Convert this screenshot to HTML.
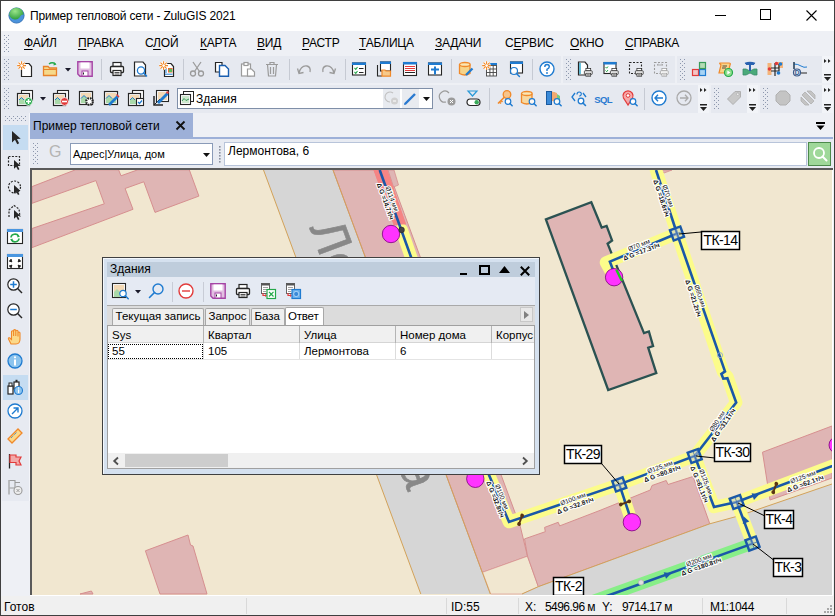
<!DOCTYPE html><html><head><meta charset="utf-8"><style>
*{box-sizing:border-box;margin:0;padding:0}
html,body{width:835px;height:616px;overflow:hidden;background:#eef0f5;font-family:"Liberation Sans",sans-serif;font-size:12px;color:#000}
.a{position:absolute;white-space:pre}
svg{position:absolute;overflow:visible}
.grip{position:absolute;width:7px;background-image:radial-gradient(circle at 1px 1px,#a9aebb 0.75px,transparent 1px),radial-gradient(circle at 3px 2.5px,#a9aebb 0.75px,transparent 1px);background-size:4px 3px}
.sep{position:absolute;width:1px;background:#c8ccd6}
.chev{position:absolute;font-size:8px;line-height:8px;color:#222}
</style></head><body><div class="a" style="left:0px;top:0px;width:835px;height:616px;background:#eef0f5"></div>
<div class="a" style="left:1px;top:1px;width:833px;height:30px;background:#fff"></div>
<svg style="left:8px;top:6.5px" width="17" height="17" viewBox="0 0 17 17"><defs><radialGradient id="gg" cx="0.4" cy="0.3" r="0.7"><stop offset="0" stop-color="#9be58a"/><stop offset="1" stop-color="#2e9d3c"/></radialGradient></defs>
<circle cx="8.5" cy="8.5" r="7.6" fill="#4b93dc" stroke="#2f6db3" stroke-width="0.9"/>
<path d="M1.3 8.6 A7.2 7.2 0 0 1 15.7 7.2 Q12.5 7.8 11.5 10.5 Q10 13 6.5 12.5 Q3 12 1.3 8.6Z" fill="url(#gg)"/></svg>
<div class="a" style="left:30px;top:9px;font-size:12px;letter-spacing:-0.17px">Пример тепловой сети - ZuluGIS 2021</div>
<div class="a" style="left:715px;top:15px;width:11px;height:1px;background:#000"></div>
<div class="a" style="left:760px;top:9px;width:11px;height:11px;border:1px solid #000"></div>
<svg style="left:806px;top:10px" width="11" height="11" viewBox="0 0 11 11"><path d="M0.5 0.5L10.5 10.5M10.5 0.5L0.5 10.5" stroke="#000" stroke-width="1.1"/></svg>
<div class="a" style="left:0px;top:0px;width:835px;height:1px;background:#3f3f3f"></div>
<div class="a" style="left:0px;top:0px;width:1px;height:616px;background:#3f3f3f"></div>
<div class="a" style="left:834px;top:0px;width:1px;height:616px;background:#3f3f3f"></div>
<div class="a" style="left:24px;top:36px;font-size:12px;letter-spacing:-0.2px"><span style="text-decoration:underline;text-underline-offset:1.5px">Ф</span>АЙЛ</div>
<div class="a" style="left:78px;top:36px;font-size:12px;letter-spacing:-0.2px"><span style="text-decoration:underline;text-underline-offset:1.5px">П</span>РАВКА</div>
<div class="a" style="left:145px;top:36px;font-size:12px;letter-spacing:-0.2px">С<span style="text-decoration:underline;text-underline-offset:1.5px">Л</span>ОЙ</div>
<div class="a" style="left:200px;top:36px;font-size:12px;letter-spacing:-0.2px"><span style="text-decoration:underline;text-underline-offset:1.5px">К</span>АРТА</div>
<div class="a" style="left:257px;top:36px;font-size:12px;letter-spacing:-0.2px"><span style="text-decoration:underline;text-underline-offset:1.5px">В</span>ИД</div>
<div class="a" style="left:302px;top:36px;font-size:12px;letter-spacing:-0.2px"><span style="text-decoration:underline;text-underline-offset:1.5px">Р</span>АСТР</div>
<div class="a" style="left:359px;top:36px;font-size:12px;letter-spacing:-0.2px"><span style="text-decoration:underline;text-underline-offset:1.5px">Т</span>АБЛИЦА</div>
<div class="a" style="left:435px;top:36px;font-size:12px;letter-spacing:-0.2px"><span style="text-decoration:underline;text-underline-offset:1.5px">З</span>АДАЧИ</div>
<div class="a" style="left:505px;top:36px;font-size:12px;letter-spacing:-0.2px">С<span style="text-decoration:underline;text-underline-offset:1.5px">Е</span>РВИС</div>
<div class="a" style="left:570px;top:36px;font-size:12px;letter-spacing:-0.2px"><span style="text-decoration:underline;text-underline-offset:1.5px">О</span>КНО</div>
<div class="a" style="left:625px;top:36px;font-size:12px;letter-spacing:-0.2px"><span style="text-decoration:underline;text-underline-offset:1.5px">С</span>ПРАВКА</div>
<svg style="left:4px;top:35px" width="5" height="18" viewBox="0 0 5 18"><g fill="#8d97ad"><rect x="0" y="0" width="1" height="1"/><rect x="4" y="0" width="1" height="1"/><rect x="2" y="2" width="1" height="1"/><rect x="0" y="4" width="1" height="1"/><rect x="4" y="4" width="1" height="1"/><rect x="2" y="6" width="1" height="1"/><rect x="0" y="8" width="1" height="1"/><rect x="4" y="8" width="1" height="1"/><rect x="2" y="10" width="1" height="1"/><rect x="0" y="12" width="1" height="1"/><rect x="4" y="12" width="1" height="1"/><rect x="2" y="14" width="1" height="1"/><rect x="0" y="16" width="1" height="1"/><rect x="4" y="16" width="1" height="1"/></g></svg>
<div class="a" style="left:2px;top:56px;width:559px;height:27px;background:#e6e9f0"></div>
<svg style="left:4px;top:59px" width="5" height="21" viewBox="0 0 5 21"><g fill="#8d97ad"><rect x="0" y="0" width="1" height="1"/><rect x="4" y="0" width="1" height="1"/><rect x="2" y="2" width="1" height="1"/><rect x="0" y="4" width="1" height="1"/><rect x="4" y="4" width="1" height="1"/><rect x="2" y="6" width="1" height="1"/><rect x="0" y="8" width="1" height="1"/><rect x="4" y="8" width="1" height="1"/><rect x="2" y="10" width="1" height="1"/><rect x="0" y="12" width="1" height="1"/><rect x="4" y="12" width="1" height="1"/><rect x="2" y="14" width="1" height="1"/><rect x="0" y="16" width="1" height="1"/><rect x="4" y="16" width="1" height="1"/><rect x="2" y="18" width="1" height="1"/><rect x="0" y="20" width="1" height="1"/><rect x="4" y="20" width="1" height="1"/></g></svg>
<svg style="left:17px;top:61px" width="16" height="16" viewBox="0 0 16 16"><path d="M4.5,2.5 H12 L14.5,5.5 V15.5 H4.5Z" fill="#fff" stroke="#262626" stroke-width="1.2"/><path d="M0.1999999999999993,4.6 H9.0 M4.6,0.1999999999999993 V9.0 M1.5199999999999996,1.5199999999999996 L7.68,7.68 M7.68,1.5199999999999996 L1.5199999999999996,7.68" stroke="#fff" stroke-width="2.4"/><path d="M0.1999999999999993,4.6 H9.0 M4.6,0.1999999999999993 V9.0 M1.5199999999999996,1.5199999999999996 L7.68,7.68 M7.68,1.5199999999999996 L1.5199999999999996,7.68" stroke="#f0892a" stroke-width="1.1"/><circle cx="4.6" cy="4.6" r="1.3" fill="#fff"/></svg>
<svg style="left:42px;top:61px" width="16" height="16" viewBox="0 0 16 16"><path d="M1.5,5.5 H6 L7.5,7 H14.5 V14.5 H1.5Z" fill="#f6d98a" stroke="#e8822a" stroke-width="1.3"/><path d="M1.5,8.5 H14.5" stroke="#e8822a" stroke-width="1"/><path d="M7,3 Q10,0.5 13.5,3" fill="none" stroke="#25a84a" stroke-width="1.4"/><path d="M12,1.2 L14.5,3.5 L11.5,4.5Z" fill="#25a84a"/></svg>
<svg style="left:77px;top:61px" width="16" height="16" viewBox="0 0 16 16"><path d="M0.8,0.8 H15.2 V15.2 H3 L0.8,13Z" fill="#e2c0e2" stroke="#a545a5" stroke-width="1.4"/><rect x="3.5" y="1.5" width="9" height="6" fill="#fff"/><rect x="5" y="10" width="6" height="5" fill="#fff" stroke="#a545a5" stroke-width="1"/><rect x="6" y="11.5" width="1" height="2" fill="#262626"/></svg>
<svg style="left:109px;top:61px" width="16" height="16" viewBox="0 0 16 16"><g transform="translate(0,0) scale(1.0)"><rect x="4" y="1.5" width="8" height="4" fill="#fff" stroke="#262626" stroke-width="1.2"/><rect x="1.5" y="5.5" width="13" height="6" rx="1" fill="#fff" stroke="#262626" stroke-width="1.3"/><rect x="4" y="9.5" width="8" height="5" fill="#fff" stroke="#262626" stroke-width="1.2"/><path d="M5.5,11.5 H10.5 M5.5,13 H10.5" stroke="#262626" stroke-width="0.8"/></g></svg>
<svg style="left:133px;top:61px" width="16" height="16" viewBox="0 0 16 16"><path d="M1.5,1.0 H10 L12.5,4.0 V15.0 H1.5Z" fill="#fff" stroke="#262626" stroke-width="1.2"/><circle cx="8" cy="9.5" r="3.6" fill="#fff" fill-opacity="0.9" stroke="#1f7bd0" stroke-width="1.3"/><path d="M10.52,12.02 l3,3" stroke="#1f7bd0" stroke-width="1.6" stroke-linecap="round"/></svg>
<svg style="left:159px;top:61px" width="16" height="16" viewBox="0 0 16 16"><path d="M5.5,2.5 H12 L14.5,5.5 V15.5 H5.5Z" fill="#fff" stroke="#262626" stroke-width="1.2"/><path d="M0.1999999999999993,4.6 H9.0 M4.6,0.1999999999999993 V9.0 M1.5199999999999996,1.5199999999999996 L7.68,7.68 M7.68,1.5199999999999996 L1.5199999999999996,7.68" stroke="#fff" stroke-width="2.4"/><path d="M0.1999999999999993,4.6 H9.0 M4.6,0.1999999999999993 V9.0 M1.5199999999999996,1.5199999999999996 L7.68,7.68 M7.68,1.5199999999999996 L1.5199999999999996,7.68" stroke="#f0892a" stroke-width="1.1"/><circle cx="4.6" cy="4.6" r="1.3" fill="#fff"/><rect x="9" y="7" width="4.5" height="4.5" fill="#e86a3a"/><rect x="10" y="8" width="3" height="3" fill="#5bbf5b"/><path d="M6,9 H8 M6,11 H8 M6,13.2 H13.5" stroke="#1f7bd0" stroke-width="1"/></svg>
<svg style="left:189px;top:61px" width="16" height="16" viewBox="0 0 16 16"><g stroke="#9b9b9b" stroke-width="1.3" fill="none"><circle cx="4" cy="12.5" r="2.5"/><circle cx="12" cy="12.5" r="2.5"/><path d="M5.5,10.5 L12,1 M10.5,10.5 L4,1"/></g></svg>
<svg style="left:214px;top:61px" width="16" height="16" viewBox="0 0 16 16"><path d="M1.5,1.5 H8 V11 H1.5Z" fill="#fff" stroke="#262626" stroke-width="1.2"/><path d="M5.5,4.5 H11 L14.5,8 V15.2 H5.5Z" fill="#fff" stroke="#1a5fb0" stroke-width="1.4"/></svg>
<svg style="left:240px;top:61px" width="16" height="16" viewBox="0 0 16 16"><g stroke="#9b9b9b" stroke-width="1.2" fill="#fff"><rect x="1.5" y="3" width="9" height="12"/><rect x="4" y="1.5" width="4" height="3"/><path d="M7.5,8 H11.5 L14.5,11 V15.2 H7.5Z"/></g></svg>
<svg style="left:264px;top:61px" width="16" height="16" viewBox="0 0 16 16"><g stroke="#9b9b9b" stroke-width="1.2" fill="none"><path d="M2,3.5 H14 M6,3.5 V1.5 H10 V3.5"/><path d="M3.5,3.5 L4.5,15 H11.5 L12.5,3.5"/><path d="M6.5,6 V13 M9.5,6 V13"/></g></svg>
<svg style="left:296px;top:61px" width="16" height="16" viewBox="0 0 16 16"><g stroke="#9b9b9b" stroke-width="1.3" fill="none"><path d="M3,12 Q5,4 11,5 Q15,6 14,11"/><path d="M1.5,7.5 L3,12.5 L7.5,11.5"/></g></svg>
<svg style="left:321px;top:61px" width="16" height="16" viewBox="0 0 16 16"><g stroke="#9b9b9b" stroke-width="1.3" fill="none"><path d="M13,12 Q11,4 5,5 Q1,6 2,11"/><path d="M14.5,7.5 L13,12.5 L8.5,11.5"/></g></svg>
<svg style="left:351px;top:61px" width="16" height="16" viewBox="0 0 16 16"><rect x="1.5" y="2.0" width="13" height="12" fill="#fff" stroke="#262626" stroke-width="1.1"/><rect x="1" y="1.5" width="14" height="2.5" fill="#1f7bd0"/><path d="M3.5,7 L4.8,8.3 L6.5,6 M3.5,11 L4.8,12.3 L6.5,10" stroke="#25a84a" stroke-width="1.1" fill="none"/><path d="M8,7.5 H12.5 M8,11.5 H12.5" stroke="#262626" stroke-width="1.1"/></svg>
<svg style="left:376px;top:61px" width="16" height="16" viewBox="0 0 16 16"><rect x="4.5" y="1.0" width="10" height="9" fill="#fff" stroke="#262626" stroke-width="1.1"/><rect x="4" y="0.5" width="11" height="2.5" fill="#1f7bd0"/><path d="M1.5,4 V15 H6" stroke="#262626" stroke-width="1.1" fill="none"/><path d="M6,9 H9 L10,10 H14.5 V15.2 H6Z" fill="#f6c98a" stroke="#f0892a" stroke-width="1.2"/></svg>
<svg style="left:402px;top:61px" width="16" height="16" viewBox="0 0 16 16"><rect x="1.5" y="1.5" width="13" height="13" fill="#fff" stroke="#262626" stroke-width="1.1"/><rect x="1" y="1" width="14" height="2.5" fill="#1f7bd0"/><path d="M3,5.5 H13 M3,7.5 H13 M3,9.5 H13" stroke="#e23b3b" stroke-width="1"/><path d="M3,11.5 H13" stroke="#262626" stroke-width="1"/></svg>
<svg style="left:427px;top:61px" width="16" height="16" viewBox="0 0 16 16"><rect x="1.5" y="2.0" width="13" height="12" fill="#fff" stroke="#262626" stroke-width="1.1"/><rect x="1" y="1.5" width="14" height="2.5" fill="#1f7bd0"/><path d="M8,5.5 V13.5 M4,8.5 H12" stroke="#1f7bd0" stroke-width="2"/></svg>
<svg style="left:458px;top:61px" width="16" height="16" viewBox="0 0 16 16"><path d="M1.5,3.5 V12.5 Q7,15.5 12,12.5 V3.5" fill="#f6d48a" stroke="#f0892a" stroke-width="1.3"/><ellipse cx="6.8" cy="3.5" rx="5.3" ry="2" fill="#fbe7b5" stroke="#f0892a" stroke-width="1.3"/><path d="M8,14 L14.5,7.5" stroke="#1f7bd0" stroke-width="2.3"/></svg>
<svg style="left:482px;top:61px" width="16" height="16" viewBox="0 0 16 16"><g stroke="#444" stroke-width="0.9" fill="none"><rect x="4.5" y="4.5" width="10" height="10.5" fill="#fff"/><path d="M4.5,8 H14.5 M4.5,11.5 H14.5 M7.9,4.5 V15 M11.2,4.5 V15"/></g><rect x="7" y="2" width="8" height="2" fill="#1f7bd0"/><path d="M0.1999999999999993,4.6 H9.0 M4.6,0.1999999999999993 V9.0 M1.5199999999999996,1.5199999999999996 L7.68,7.68 M7.68,1.5199999999999996 L1.5199999999999996,7.68" stroke="#fff" stroke-width="2.4"/><path d="M0.1999999999999993,4.6 H9.0 M4.6,0.1999999999999993 V9.0 M1.5199999999999996,1.5199999999999996 L7.68,7.68 M7.68,1.5199999999999996 L1.5199999999999996,7.68" stroke="#f0892a" stroke-width="1.1"/><circle cx="4.6" cy="4.6" r="1.3" fill="#fff"/></svg>
<svg style="left:508px;top:61px" width="16" height="16" viewBox="0 0 16 16"><rect x="2.5" y="1.0" width="12" height="11" fill="#fff" stroke="#262626" stroke-width="1.1"/><rect x="2" y="0.5" width="13" height="2.5" fill="#1f7bd0"/><circle cx="6" cy="10" r="3.5" fill="#fff" fill-opacity="0.9" stroke="#1f7bd0" stroke-width="1.2"/><path d="M8.45,12.45 l3,3" stroke="#1f7bd0" stroke-width="1.5" stroke-linecap="round"/></svg>
<svg style="left:539px;top:61px" width="16" height="16" viewBox="0 0 16 16"><circle cx="8" cy="8" r="7" fill="#fff" stroke="#1f7bd0" stroke-width="1.4"/><path d="M5.8,6 Q5.8,3.5 8,3.5 Q10.3,3.5 10.3,5.8 Q10.3,7.3 8,8.3 V10" fill="none" stroke="#1f7bd0" stroke-width="1.4"/><circle cx="8" cy="12" r="0.9" fill="#1f7bd0"/></svg>
<svg style="left:65px;top:68px" width="6" height="4" viewBox="0 0 6 4"><path d="M0,0 H6 L3,3.5Z" fill="#1a1a2a"/></svg>
<div class="a" style="left:101px;top:59px;width:1px;height:21px;background:#c6cad3"></div>
<div class="a" style="left:183px;top:59px;width:1px;height:21px;background:#c6cad3"></div>
<div class="a" style="left:289px;top:59px;width:1px;height:21px;background:#c6cad3"></div>
<div class="a" style="left:345px;top:59px;width:1px;height:21px;background:#c6cad3"></div>
<div class="a" style="left:451px;top:59px;width:1px;height:21px;background:#c6cad3"></div>
<div class="a" style="left:532px;top:59px;width:1px;height:21px;background:#c6cad3"></div>
<div class="a" style="left:563px;top:56px;width:112px;height:27px;background:#e6e9f0"></div>
<svg style="left:566px;top:59px" width="5" height="21" viewBox="0 0 5 21"><g fill="#8d97ad"><rect x="0" y="0" width="1" height="1"/><rect x="4" y="0" width="1" height="1"/><rect x="2" y="2" width="1" height="1"/><rect x="0" y="4" width="1" height="1"/><rect x="4" y="4" width="1" height="1"/><rect x="2" y="6" width="1" height="1"/><rect x="0" y="8" width="1" height="1"/><rect x="4" y="8" width="1" height="1"/><rect x="2" y="10" width="1" height="1"/><rect x="0" y="12" width="1" height="1"/><rect x="4" y="12" width="1" height="1"/><rect x="2" y="14" width="1" height="1"/><rect x="0" y="16" width="1" height="1"/><rect x="4" y="16" width="1" height="1"/><rect x="2" y="18" width="1" height="1"/><rect x="0" y="20" width="1" height="1"/><rect x="4" y="20" width="1" height="1"/></g></svg>
<svg style="left:577px;top:61px" width="16" height="16" viewBox="0 0 16 16"><path d="M1.5,1.0 H8 L10.5,4.0 V14.0 H1.5Z" fill="#fff" stroke="#262626" stroke-width="1.2"/><path d="M3,2 V13" stroke="#1aa0c8" stroke-width="1.3"/><g transform="translate(6.5,6.5) scale(0.6)"><rect x="4" y="1.5" width="8" height="4" fill="#fff" stroke="#262626" stroke-width="1.2"/><rect x="1.5" y="5.5" width="13" height="6" rx="1" fill="#fff" stroke="#262626" stroke-width="1.3"/><rect x="4" y="9.5" width="8" height="5" fill="#fff" stroke="#262626" stroke-width="1.2"/><path d="M5.5,11.5 H10.5 M5.5,13 H10.5" stroke="#262626" stroke-width="0.8"/></g></svg>
<svg style="left:603px;top:61px" width="16" height="16" viewBox="0 0 16 16"><rect x="1.0" y="1.5" width="12" height="11" fill="#fff" stroke="#262626" stroke-width="1.1"/><rect x="0.5" y="1" width="13" height="2.5" fill="#1f7bd0"/><path d="M2.5,6 L3.7,7.2 L5,5.5 M2.5,9.5 L3.7,10.7 L5,9" stroke="#25a84a" stroke-width="1" fill="none"/><g transform="translate(6.5,6.5) scale(0.6)"><rect x="4" y="1.5" width="8" height="4" fill="#fff" stroke="#262626" stroke-width="1.2"/><rect x="1.5" y="5.5" width="13" height="6" rx="1" fill="#fff" stroke="#262626" stroke-width="1.3"/><rect x="4" y="9.5" width="8" height="5" fill="#fff" stroke="#262626" stroke-width="1.2"/><path d="M5.5,11.5 H10.5 M5.5,13 H10.5" stroke="#262626" stroke-width="0.8"/></g></svg>
<svg style="left:628px;top:61px" width="16" height="16" viewBox="0 0 16 16"><rect x="1.5" y="1.5" width="12" height="11" fill="none" stroke="#262626" stroke-width="1.1" stroke-dasharray="2,1.5"/><g transform="translate(6.5,6.5) scale(0.6)"><rect x="4" y="1.5" width="8" height="4" fill="#fff" stroke="#262626" stroke-width="1.2"/><rect x="1.5" y="5.5" width="13" height="6" rx="1" fill="#fff" stroke="#262626" stroke-width="1.3"/><rect x="4" y="9.5" width="8" height="5" fill="#fff" stroke="#262626" stroke-width="1.2"/><path d="M5.5,11.5 H10.5 M5.5,13 H10.5" stroke="#262626" stroke-width="0.8"/></g></svg>
<svg style="left:653px;top:61px" width="16" height="16" viewBox="0 0 16 16"><rect x="1.5" y="1.5" width="12" height="11" fill="none" stroke="#9b9b9b" stroke-width="1.1" stroke-dasharray="2,1.5"/><path d="M4,4 H10 M4,4 L5.5,3 M10,4 L8.5,3" stroke="#9b9b9b" stroke-width="0.8"/><g transform="translate(6.5,6.5) scale(0.6)"><rect x="4" y="1.5" width="8" height="4" fill="#fff" stroke="#9b9b9b" stroke-width="1.2"/><rect x="1.5" y="5.5" width="13" height="6" rx="1" fill="#fff" stroke="#9b9b9b" stroke-width="1.3"/><rect x="4" y="9.5" width="8" height="5" fill="#fff" stroke="#9b9b9b" stroke-width="1.2"/><path d="M5.5,11.5 H10.5 M5.5,13 H10.5" stroke="#9b9b9b" stroke-width="0.8"/></g></svg>
<div class="a" style="left:677px;top:56px;width:146px;height:27px;background:#e6e9f0"></div>
<svg style="left:680px;top:59px" width="5" height="21" viewBox="0 0 5 21"><g fill="#8d97ad"><rect x="0" y="0" width="1" height="1"/><rect x="4" y="0" width="1" height="1"/><rect x="2" y="2" width="1" height="1"/><rect x="0" y="4" width="1" height="1"/><rect x="4" y="4" width="1" height="1"/><rect x="2" y="6" width="1" height="1"/><rect x="0" y="8" width="1" height="1"/><rect x="4" y="8" width="1" height="1"/><rect x="2" y="10" width="1" height="1"/><rect x="0" y="12" width="1" height="1"/><rect x="4" y="12" width="1" height="1"/><rect x="2" y="14" width="1" height="1"/><rect x="0" y="16" width="1" height="1"/><rect x="4" y="16" width="1" height="1"/><rect x="2" y="18" width="1" height="1"/><rect x="0" y="20" width="1" height="1"/><rect x="4" y="20" width="1" height="1"/></g></svg>
<svg style="left:691px;top:61px" width="16" height="16" viewBox="0 0 16 16"><rect x="1.5" y="8.5" width="6" height="6" fill="#f4c4c4" stroke="#e23b3b" stroke-width="1.2"/><rect x="8.5" y="8.5" width="6" height="6" fill="#a8d4f4" stroke="#1f7bd0" stroke-width="1.2"/><rect x="8.5" y="1.5" width="6" height="6" fill="#b4dcb4" stroke="#3a9a5a" stroke-width="1.2"/></svg>
<svg style="left:717px;top:61px" width="16" height="16" viewBox="0 0 16 16"><path d="M3,2 H12 Q14,2 13,4 L11,12 H2 L4,4 Q2,2 3,2Z" fill="#f8d48a" stroke="#f0892a" stroke-width="1.2"/><path d="M5.5,5 H10 M5,7 H9" stroke="#262626" stroke-width="0.8"/><circle cx="11.5" cy="11.5" r="4" fill="#8de08d" stroke="#25a84a" stroke-width="1.2"/><path d="M10.3,9.5 L13.5,11.5 L10.3,13.5Z" fill="#fff"/></svg>
<svg style="left:742px;top:61px" width="16" height="16" viewBox="0 0 16 16"><path d="M1,8 H4 L8,10 L12,8 H15 V14 H12 L8,12 L4,14 H1Z" fill="#4aaa7a" stroke="#3a8a6a" stroke-width="0.8"/><path d="M8,10 V3 M4,3 H12" stroke="#2a62b0" stroke-width="2"/><path d="M3,2.5 Q8,0.5 13,2.5" stroke="#2a62b0" stroke-width="1.5" fill="none"/></svg>
<svg style="left:767px;top:61px" width="16" height="16" viewBox="0 0 16 16"><rect x="0.5" y="2" width="4" height="12" fill="#f4b47a"/><rect x="11" y="1" width="5" height="6" fill="#f4b47a"/><path d="M8,2 V15 M4,7 H12 M12,3 V10 H8 M4,10 H8" stroke="#262626" stroke-width="1.2" fill="none"/><circle cx="2.5" cy="8" r="1.8" fill="#e23b3b"/><circle cx="9.5" cy="2.5" r="1.8" fill="#e23b3b"/><circle cx="13.5" cy="3" r="1.8" fill="#1f7bd0"/><circle cx="11.5" cy="12" r="1.8" fill="#1f7bd0"/></svg>
<svg style="left:792px;top:61px" width="16" height="16" viewBox="0 0 16 16"><path d="M2,1 V8 M2,3 Q6,3 9,5 Q12,7 15,6" stroke="#1f7bd0" stroke-width="1" fill="none"/><path d="M2,3 H15" stroke="#262626" stroke-width="0" /><circle cx="5" cy="11.5" r="3.5" fill="#dfe8f4" stroke="#3a5a8a" stroke-width="1.2"/><text x="5" y="13.8" font-size="6.5" text-anchor="middle" font-family="Liberation Sans" font-weight="bold" fill="#3a5a8a">D</text><path d="M9,12 H15 M2,1 V8" stroke="#262626" stroke-width="1.1"/></svg>
<div class="a" style="left:822px;top:56px;width:11px;height:27px;background:#f2f4f8"></div>
<svg style="left:824px;top:59px" width="7" height="4" viewBox="0 0 7 4"><path d="M0,0 L2.5,2 L0,4Z M4,0 L6.5,2 L4,4Z" fill="#222"/></svg>
<svg style="left:824px;top:74px" width="7" height="7" viewBox="0 0 7 7"><rect x="0" y="0" width="7" height="1.5" fill="#222"/><path d="M0,3 H7 L3.5,7Z" fill="#222"/></svg>
<div class="a" style="left:2px;top:85px;width:696px;height:28px;background:#e6e9f0"></div>
<svg style="left:4px;top:88px" width="5" height="22" viewBox="0 0 5 22"><g fill="#8d97ad"><rect x="0" y="0" width="1" height="1"/><rect x="4" y="0" width="1" height="1"/><rect x="2" y="2" width="1" height="1"/><rect x="0" y="4" width="1" height="1"/><rect x="4" y="4" width="1" height="1"/><rect x="2" y="6" width="1" height="1"/><rect x="0" y="8" width="1" height="1"/><rect x="4" y="8" width="1" height="1"/><rect x="2" y="10" width="1" height="1"/><rect x="0" y="12" width="1" height="1"/><rect x="4" y="12" width="1" height="1"/><rect x="2" y="14" width="1" height="1"/><rect x="0" y="16" width="1" height="1"/><rect x="4" y="16" width="1" height="1"/><rect x="2" y="18" width="1" height="1"/><rect x="0" y="20" width="1" height="1"/><rect x="4" y="20" width="1" height="1"/></g></svg>
<svg style="left:17px;top:90px" width="16" height="16" viewBox="0 0 16 16"><rect x="4.5" y="0.5" width="11" height="10" fill="#fff" stroke="#262626" stroke-width="1.1"/><rect x="0.5" y="3.5" width="12" height="12" fill="#fff" stroke="#262626" stroke-width="1.2"/><rect x="2" y="5" width="9" height="9" fill="#f3d9b5"/><path d="M2,14 V10 L4.5,7.5 L7,10 L11,9 V14Z" fill="#a9d9a9"/><path d="M2,10 L4.5,7.5 L7,10" fill="none" stroke="#1f7bd0" stroke-width="1"/><circle cx="11.5" cy="11.5" r="4" fill="#25a84a" stroke="#fff" stroke-width="0.8"/><path d="M11.5,9 V14 M9,11.5 H14" stroke="#fff" stroke-width="1.5"/></svg>
<svg style="left:53px;top:90px" width="16" height="16" viewBox="0 0 16 16"><rect x="4.5" y="0.5" width="11" height="10" fill="#fff" stroke="#262626" stroke-width="1.1"/><rect x="0.5" y="3.5" width="12" height="12" fill="#fff" stroke="#262626" stroke-width="1.2"/><rect x="2" y="5" width="9" height="9" fill="#f3d9b5"/><path d="M2,14 V10 L4.5,7.5 L7,10 L11,9 V14Z" fill="#a9d9a9"/><path d="M2,10 L4.5,7.5 L7,10" fill="none" stroke="#1f7bd0" stroke-width="1"/><circle cx="11.5" cy="11.5" r="4" fill="#e23b3b" stroke="#fff" stroke-width="0.8"/><path d="M9,11.5 H14" stroke="#fff" stroke-width="1.6"/></svg>
<svg style="left:78px;top:90px" width="16" height="16" viewBox="0 0 16 16"><rect x="1.5" y="1.5" width="13" height="13" fill="#fff" stroke="#262626" stroke-width="1.2"/><rect x="3" y="3" width="10" height="10" fill="#f3d9b5"/><path d="M3,13 V8.5 L6,5.5 L9,8.5 L13,7.5 V13Z" fill="#a9d9a9"/><path d="M3,8.5 L6,5.5 L9,8.5" fill="none" stroke="#1f7bd0" stroke-width="1"/><circle cx="11.5" cy="11.5" r="3.3" fill="#fff" stroke="#262626" stroke-width="2.2" stroke-dasharray="1.6,1"/><circle cx="11.5" cy="11.5" r="1.2" fill="#fff"/></svg>
<svg style="left:103px;top:90px" width="16" height="16" viewBox="0 0 16 16"><rect x="1.5" y="1.5" width="13" height="13" fill="#fff" stroke="#262626" stroke-width="1.2"/><rect x="3" y="3" width="10" height="10" fill="#f3d9b5"/><path d="M3,13 V8.5 L6,5.5 L9,8.5 L13,7.5 V13Z" fill="#a9d9a9"/><path d="M3,8.5 L6,5.5 L9,8.5" fill="none" stroke="#1f7bd0" stroke-width="1"/><path d="M6,15 L15,6" stroke="#1f7bd0" stroke-width="2.6"/><path d="M13.5,4.5 L16,7" stroke="#e23b3b" stroke-width="1.5"/></svg>
<svg style="left:128px;top:90px" width="16" height="16" viewBox="0 0 16 16"><rect x="4.5" y="0.5" width="11" height="10" fill="#fff" stroke="#262626" stroke-width="1.1"/><rect x="0.5" y="3.5" width="12" height="12" fill="#fff" stroke="#262626" stroke-width="1.2"/><rect x="2" y="5" width="9" height="9" fill="#f3d9b5"/><path d="M2,14 V10 L4.5,7.5 L7,10 L11,9 V14Z" fill="#a9d9a9"/><path d="M2,10 L4.5,7.5 L7,10" fill="none" stroke="#1f7bd0" stroke-width="1"/><rect x="8.5" y="8.5" width="7" height="7" fill="#fff" stroke="#262626" stroke-width="1.1"/><path d="M10,12 L11.5,13.5 L14,10.5" stroke="#1f7bd0" stroke-width="1.2" fill="none"/></svg>
<svg style="left:153px;top:90px" width="16" height="16" viewBox="0 0 16 16"><rect x="3.5" y="0.5" width="12" height="11" fill="#fff" stroke="#262626" stroke-width="1.1"/><rect x="5" y="2" width="9" height="8" fill="#f3d9b5"/><path d="M1,6 L1,15 L10,15" stroke="#262626" stroke-width="1.5" fill="none"/><path d="M1,15 L7,9" stroke="#262626" stroke-width="1"/><path d="M5,13 L14.5,3.5" stroke="#1f7bd0" stroke-width="2.8"/><circle cx="14.5" cy="2.5" r="1.3" fill="#e23b3b"/></svg>
<svg style="left:40px;top:97px" width="6" height="4" viewBox="0 0 6 4"><path d="M0,0 H6 L3,3.5Z" fill="#1a1a2a"/></svg>
<div class="a" style="left:177px;top:88px;width:256px;height:21px;background:#fff;border:1px solid #7f8fa8"></div>
<svg style="left:180px;top:91px" width="14" height="14" viewBox="0 0 14 14"><rect x="3.5" y="0.5" width="10" height="10" fill="#fff" stroke="#262626" stroke-width="1"/><rect x="0.5" y="3.5" width="10" height="10" fill="#fff" stroke="#262626" stroke-width="1.1"/><rect x="2" y="5" width="7" height="7" fill="#cde8cd"/><path d="M2,10 L4,7.5 L6,9.5 L9,8" stroke="#3a9a5a" stroke-width="1" fill="none"/></svg>
<div class="a" style="left:196px;top:92px;font-size:12px;line-height:14px">Здания</div>
<div class="a" style="left:383px;top:89px;width:17px;height:19px;background:#e8ebf0"></div>
<svg style="left:384px;top:90px" width="16" height="16" viewBox="0 0 16 16"><path d="M9,3 A5,5 0 1 0 6,12" stroke="#c0c0c0" stroke-width="1.1" fill="none"/><circle cx="10.5" cy="11" r="3.5" fill="#d0d0d0"/><path d="M9,11 H12" stroke="#fff" stroke-width="1"/></svg>
<div class="a" style="left:402px;top:89px;width:17px;height:19px;background:#e8ebf0"></div>
<svg style="left:402px;top:90px" width="16" height="16" viewBox="0 0 16 16"><path d="M3,14 L13,4" stroke="#2a7ad0" stroke-width="2.4"/><path d="M2.5,13 L2,15 L4,14.5" fill="#2a7ad0"/></svg>
<svg style="left:423px;top:97px" width="7" height="4" viewBox="0 0 7 4"><path d="M0,0 H7 L3.5,4Z" fill="#111"/></svg>
<svg style="left:440px;top:90px" width="16" height="16" viewBox="0 0 16 16"><path d="M9,3 A5.5,5.5 0 1 0 6,12" stroke="#9b9b9b" stroke-width="1.2" fill="none"/><circle cx="11.5" cy="11.5" r="4" fill="#9b9b9b"/><path d="M10,10 L13,13 M13,10 L10,13" stroke="#fff" stroke-width="1"/></svg>
<svg style="left:465px;top:90px" width="16" height="16" viewBox="0 0 16 16"><path d="M3,1 H12 L7.5,6Z" fill="none" stroke="#2a9ad8" stroke-width="1.2"/><path d="M3,1 L12,11" stroke="#2a9ad8" stroke-width="0"/><rect x="2" y="9" width="13" height="6.5" rx="3.2" fill="#fff" stroke="#262626" stroke-width="1.2"/><circle cx="11.7" cy="12.2" r="2.2" fill="#3aaa5a"/></svg>
<svg style="left:496px;top:90px" width="16" height="16" viewBox="0 0 16 16"><circle cx="11" cy="4.5" r="3.8" fill="#f8c48a" stroke="#f0892a" stroke-width="1.3"/><path d="M8.5,7 L2,13.5 M3.5,12 L5,13.5 M5,10.5 L6.5,12" stroke="#f0892a" stroke-width="1.6"/><circle cx="12" cy="11.5" r="2.8" fill="#fff" fill-opacity="0.9" stroke="#1f7bd0" stroke-width="1.2"/><path d="M13.959999999999999,13.459999999999999 l2.2,2.2" stroke="#1f7bd0" stroke-width="1.5" stroke-linecap="round"/></svg>
<svg style="left:520px;top:90px" width="16" height="16" viewBox="0 0 16 16"><path d="M1.5,3.5 V12.5 Q7,15.5 12,12.5 V3.5" fill="#f8d8a0" stroke="#f0892a" stroke-width="1.3"/><ellipse cx="6.8" cy="3.5" rx="5.3" ry="2" fill="#fbe7b5" stroke="#f0892a" stroke-width="1.3"/><circle cx="12" cy="11.5" r="2.8" fill="#fff" fill-opacity="0.9" stroke="#1f7bd0" stroke-width="1.2"/><path d="M13.959999999999999,13.459999999999999 l2.2,2.2" stroke="#1f7bd0" stroke-width="1.5" stroke-linecap="round"/></svg>
<svg style="left:545px;top:90px" width="16" height="16" viewBox="0 0 16 16"><path d="M9,2 L15,6 V13 L9,10Z" fill="#7acb7a"/><path d="M7,1.5 L12,3 V12 L7,11Z" fill="#f2a870"/><rect x="1.5" y="1.5" width="5" height="13" fill="#3a8ad8" stroke="#1a5aa0" stroke-width="1"/><circle cx="12" cy="11.5" r="2.8" fill="#fff" fill-opacity="0.9" stroke="#1f7bd0" stroke-width="1.2"/><path d="M13.959999999999999,13.459999999999999 l2.2,2.2" stroke="#1f7bd0" stroke-width="1.5" stroke-linecap="round"/></svg>
<svg style="left:571px;top:90px" width="16" height="16" viewBox="0 0 16 16"><path d="M4,3 L1,7 L4,11 M12,3 L15,7" stroke="#1f7bd0" stroke-width="1.3" fill="none"/><path d="M6,4.5 Q6,2 8.2,2 Q10.5,2 10.3,4.2 Q10.2,5.5 8.3,6.3" stroke="#1f7bd0" stroke-width="1.2" fill="none"/><circle cx="10" cy="11" r="2.8" fill="#fff" fill-opacity="0.9" stroke="#1f7bd0" stroke-width="1.3"/><path d="M11.959999999999999,12.959999999999999 l2.5,2.5" stroke="#1f7bd0" stroke-width="1.6" stroke-linecap="round"/></svg>
<svg style="left:595px;top:90px" width="16" height="16" viewBox="0 0 16 16"><text x="8" y="12.5" font-size="9.5" font-family="Liberation Sans" font-weight="bold" text-anchor="middle" fill="#2a7ad0" letter-spacing="-0.6">SQL</text></svg>
<svg style="left:621px;top:90px" width="16" height="16" viewBox="0 0 16 16"><path d="M7,15 L2.5,8 A5,5 0 1 1 11.5,8Z" fill="#f7a8a8" stroke="#e23b3b" stroke-width="1.3"/><circle cx="7" cy="5.5" r="1.8" fill="#fff" stroke="#e23b3b" stroke-width="1"/><circle cx="12" cy="11.5" r="2.8" fill="#fff" fill-opacity="0.9" stroke="#1f7bd0" stroke-width="1.2"/><path d="M13.959999999999999,13.459999999999999 l2.2,2.2" stroke="#1f7bd0" stroke-width="1.5" stroke-linecap="round"/></svg>
<svg style="left:651px;top:90px" width="16" height="16" viewBox="0 0 16 16"><circle cx="8" cy="8" r="7" fill="#fff" stroke="#1f7bd0" stroke-width="1.4"/><path d="M12,8 H4 M7,4.8 L4,8 L7,11.2" stroke="#1f7bd0" stroke-width="1.4" fill="none"/></svg>
<svg style="left:676px;top:90px" width="16" height="16" viewBox="0 0 16 16"><circle cx="8" cy="8" r="7" fill="none" stroke="#aaaaaa" stroke-width="1.3"/><path d="M4,8 H12 M9,4.8 L12,8 L9,11.2" stroke="#aaaaaa" stroke-width="1.3" fill="none"/></svg>
<div class="a" style="left:489px;top:88px;width:1px;height:22px;background:#c6cad3"></div>
<div class="a" style="left:644px;top:88px;width:1px;height:22px;background:#c6cad3"></div>
<div class="a" style="left:698px;top:85px;width:11px;height:28px;background:#f2f4f8"></div>
<svg style="left:700px;top:88px" width="7" height="4" viewBox="0 0 7 4"><path d="M0,0 L2.5,2 L0,4Z M4,0 L6.5,2 L4,4Z" fill="#222"/></svg>
<svg style="left:700px;top:104px" width="7" height="7" viewBox="0 0 7 7"><rect x="0" y="0" width="7" height="1.5" fill="#222"/><path d="M0,3 H7 L3.5,7Z" fill="#222"/></svg>
<div class="a" style="left:711px;top:85px;width:36px;height:28px;background:#e6e9f0"></div>
<svg style="left:714px;top:88px" width="5" height="22" viewBox="0 0 5 22"><g fill="#8d97ad"><rect x="0" y="0" width="1" height="1"/><rect x="4" y="0" width="1" height="1"/><rect x="2" y="2" width="1" height="1"/><rect x="0" y="4" width="1" height="1"/><rect x="4" y="4" width="1" height="1"/><rect x="2" y="6" width="1" height="1"/><rect x="0" y="8" width="1" height="1"/><rect x="4" y="8" width="1" height="1"/><rect x="2" y="10" width="1" height="1"/><rect x="0" y="12" width="1" height="1"/><rect x="4" y="12" width="1" height="1"/><rect x="2" y="14" width="1" height="1"/><rect x="0" y="16" width="1" height="1"/><rect x="4" y="16" width="1" height="1"/><rect x="2" y="18" width="1" height="1"/><rect x="0" y="20" width="1" height="1"/><rect x="4" y="20" width="1" height="1"/></g></svg>
<svg style="left:726px;top:90px" width="16" height="16" viewBox="0 0 16 16"><path d="M1.5,9 L9,1.5 H14.5 V7 L7,14.5Z" fill="#c8c8c8" stroke="#b0b0b0" stroke-width="1"/><circle cx="11.8" cy="4.2" r="1.2" fill="#fff" stroke="#999" stroke-width="0.6"/></svg>
<div class="a" style="left:747px;top:85px;width:11px;height:28px;background:#f2f4f8"></div>
<svg style="left:749px;top:88px" width="7" height="4" viewBox="0 0 7 4"><path d="M0,0 L2.5,2 L0,4Z M4,0 L6.5,2 L4,4Z" fill="#222"/></svg>
<svg style="left:749px;top:104px" width="7" height="7" viewBox="0 0 7 7"><rect x="0" y="0" width="7" height="1.5" fill="#222"/><path d="M0,3 H7 L3.5,7Z" fill="#222"/></svg>
<div class="a" style="left:760px;top:85px;width:63px;height:28px;background:#e6e9f0"></div>
<svg style="left:763px;top:88px" width="5" height="22" viewBox="0 0 5 22"><g fill="#8d97ad"><rect x="0" y="0" width="1" height="1"/><rect x="4" y="0" width="1" height="1"/><rect x="2" y="2" width="1" height="1"/><rect x="0" y="4" width="1" height="1"/><rect x="4" y="4" width="1" height="1"/><rect x="2" y="6" width="1" height="1"/><rect x="0" y="8" width="1" height="1"/><rect x="4" y="8" width="1" height="1"/><rect x="2" y="10" width="1" height="1"/><rect x="0" y="12" width="1" height="1"/><rect x="4" y="12" width="1" height="1"/><rect x="2" y="14" width="1" height="1"/><rect x="0" y="16" width="1" height="1"/><rect x="4" y="16" width="1" height="1"/><rect x="2" y="18" width="1" height="1"/><rect x="0" y="20" width="1" height="1"/><rect x="4" y="20" width="1" height="1"/></g></svg>
<svg style="left:775px;top:90px" width="16" height="16" viewBox="0 0 16 16"><path d="M5,1 H11 L15,5 V11 L11,15 H5 L1,11 V5Z" fill="#c4c4c4" stroke="#b0b0b0" stroke-width="1"/></svg>
<svg style="left:800px;top:90px" width="16" height="16" viewBox="0 0 16 16"><path d="M5,2 L14,11 L11,14 L2,5Z M7,1 L15,9 L15,5 L11,1Z M1,7 L9,15 H5 L1,11Z" fill="#c4c4c4" stroke="#b0b0b0" stroke-width="0.8"/></svg>
<div class="a" style="left:822px;top:85px;width:11px;height:28px;background:#f2f4f8"></div>
<svg style="left:824px;top:88px" width="7" height="4" viewBox="0 0 7 4"><path d="M0,0 L2.5,2 L0,4Z M4,0 L6.5,2 L4,4Z" fill="#222"/></svg>
<svg style="left:824px;top:104px" width="7" height="7" viewBox="0 0 7 7"><rect x="0" y="0" width="7" height="1.5" fill="#222"/><path d="M0,3 H7 L3.5,7Z" fill="#222"/></svg>
<div class="a" style="left:30px;top:113px;width:163px;height:25px;background:#9db0d8"></div>
<div class="a" style="left:33px;top:119px;font-size:12px;color:#000">Пример тепловой сети</div>
<svg style="left:176px;top:121px" width="9" height="9" viewBox="0 0 9 9"><path d="M0.5 0.5L8.5 8.5M8.5 0.5L0.5 8.5" stroke="#111" stroke-width="1.8"/></svg>
<div class="a" style="left:30px;top:137px;width:803px;height:2px;background:#9db0d8"></div>
<svg style="left:816px;top:122px" width="9" height="8" viewBox="0 0 9 8"><rect x="0" y="0" width="9" height="2" fill="#000"/><path d="M0.5,3.5 H8.5 L4.5,8Z" fill="#000"/></svg>
<div class="a" style="left:30px;top:139px;width:803px;height:29px;background:#e8ebf2"></div>
<svg style="left:33px;top:143px" width="5" height="21" viewBox="0 0 5 21"><g fill="#8d97ad"><rect x="0" y="0" width="1" height="1"/><rect x="4" y="0" width="1" height="1"/><rect x="2" y="2" width="1" height="1"/><rect x="0" y="4" width="1" height="1"/><rect x="4" y="4" width="1" height="1"/><rect x="2" y="6" width="1" height="1"/><rect x="0" y="8" width="1" height="1"/><rect x="4" y="8" width="1" height="1"/><rect x="2" y="10" width="1" height="1"/><rect x="0" y="12" width="1" height="1"/><rect x="4" y="12" width="1" height="1"/><rect x="2" y="14" width="1" height="1"/><rect x="0" y="16" width="1" height="1"/><rect x="4" y="16" width="1" height="1"/><rect x="2" y="18" width="1" height="1"/><rect x="0" y="20" width="1" height="1"/><rect x="4" y="20" width="1" height="1"/></g></svg>
<div class="a" style="left:49px;top:143px;font-size:16px;color:#b4b4b4">G</div>
<svg style="left:219px;top:146px" width="2" height="18" viewBox="0 0 2 18"><g fill="#8a90a0"><rect x="0" y="0" width="1.6" height="1.6"/><rect x="0" y="3" width="1.6" height="1.6"/><rect x="0" y="6" width="1.6" height="1.6"/><rect x="0" y="9" width="1.6" height="1.6"/><rect x="0" y="12" width="1.6" height="1.6"/><rect x="0" y="15" width="1.6" height="1.6"/></g></svg>
<div class="a" style="left:70px;top:143px;width:143px;height:22px;background:#fff;border:1px solid #8a9bb8"></div>
<div class="a" style="left:73px;top:148px;font-size:11px">Адрес|Улица, дом</div>
<svg style="left:203px;top:153px" width="7" height="4" viewBox="0 0 7 4"><path d="M0,0 H7 L3.5,4Z" fill="#111"/></svg>
<div class="a" style="left:224px;top:142px;width:583px;height:24px;background:#fff;border:1px solid #b8c4da"></div>
<div class="a" style="left:228px;top:144px;font-size:12px">Лермонтова, 6</div>
<div class="a" style="left:808px;top:142px;width:23px;height:24px;background:#9fd89a;border:1px solid #4c8a4c"></div>
<svg style="left:812px;top:146px" width="16" height="16" viewBox="0 0 16 16"><circle cx="7" cy="7" r="5" fill="none" stroke="#fff" stroke-width="1.8"/><path d="M10.5,10.5 L14.5,14.5" stroke="#fff" stroke-width="2" stroke-linecap="round"/></svg>
<div class="a" style="left:2px;top:113px;width:27px;height:388px;background:#e7eaf1"></div>
<div class="a" style="left:29px;top:113px;width:1px;height:388px;background:#f4f5f9"></div>
<svg style="left:5px;top:116px" width="21" height="5" viewBox="0 0 21 5"><g fill="#8d97ad"><rect x="0" y="0" width="1" height="1"/><rect x="0" y="4" width="1" height="1"/><rect x="2" y="2" width="1" height="1"/><rect x="4" y="0" width="1" height="1"/><rect x="4" y="4" width="1" height="1"/><rect x="6" y="2" width="1" height="1"/><rect x="8" y="0" width="1" height="1"/><rect x="8" y="4" width="1" height="1"/><rect x="10" y="2" width="1" height="1"/><rect x="12" y="0" width="1" height="1"/><rect x="12" y="4" width="1" height="1"/><rect x="14" y="2" width="1" height="1"/><rect x="16" y="0" width="1" height="1"/><rect x="16" y="4" width="1" height="1"/><rect x="18" y="2" width="1" height="1"/><rect x="20" y="0" width="1" height="1"/><rect x="20" y="4" width="1" height="1"/></g></svg>
<div class="a" style="left:3px;top:125px;width:25px;height:25px;background:#c5dcf1"></div>
<div class="a" style="left:3px;top:375px;width:25px;height:25px;background:#c5dcf1"></div>
<svg style="left:7px;top:129px" width="16" height="16" viewBox="0 0 16 16"><path transform="translate(5,2) scale(1.05)" d="M0,0 L0,11 L2.8,8.3 L5,12.5 L6.8,11.6 L4.7,7.6 L8.3,7.4Z" fill="#262626"/></svg>
<svg style="left:7px;top:154px" width="16" height="16" viewBox="0 0 16 16"><rect x="1.5" y="2.5" width="11" height="9" fill="none" stroke="#262626" stroke-width="1.2" stroke-dasharray="2,1.4"/><path transform="translate(7,6) scale(0.8)" d="M0,0 L0,11 L2.8,8.3 L5,12.5 L6.8,11.6 L4.7,7.6 L8.3,7.4Z" fill="#262626"/></svg>
<svg style="left:7px;top:179px" width="16" height="16" viewBox="0 0 16 16"><circle cx="7.5" cy="8" r="6" fill="none" stroke="#262626" stroke-width="1.2" stroke-dasharray="2,1.4"/><path transform="translate(7,6) scale(0.8)" d="M0,0 L0,11 L2.8,8.3 L5,12.5 L6.8,11.6 L4.7,7.6 L8.3,7.4Z" fill="#262626"/></svg>
<svg style="left:7px;top:204px" width="16" height="16" viewBox="0 0 16 16"><path d="M2,13 V6 L7,1.5 L12,5 L13,13" fill="none" stroke="#262626" stroke-width="1.2" stroke-dasharray="2,1.4"/><path transform="translate(7,6) scale(0.8)" d="M0,0 L0,11 L2.8,8.3 L5,12.5 L6.8,11.6 L4.7,7.6 L8.3,7.4Z" fill="#262626"/></svg>
<svg style="left:7px;top:229px" width="16" height="16" viewBox="0 0 16 16"><rect x="0.5" y="0.5" width="15" height="14" fill="#fff" stroke="#262626" stroke-width="1.1"/><rect x="0" y="0" width="16" height="3" fill="#4a96e0"/><path d="M4,8.5 A4,3.5 0 0 1 11.5,7 M12,9.5 A4,3.5 0 0 1 4.5,11" fill="none" stroke="#25a84a" stroke-width="1.6"/><path d="M10,5 L13,7.5 L10.5,8.5Z M6,13 L3,10.5 L5.5,9.5Z" fill="#25a84a"/></svg>
<svg style="left:7px;top:254px" width="16" height="16" viewBox="0 0 16 16"><rect x="0.5" y="0.5" width="15" height="14" fill="#fff" stroke="#262626" stroke-width="1.1"/><rect x="0" y="0" width="16" height="3" fill="#4a96e0"/><path d="M3,6 L5,8 M3,6 V8 M3,6 H5 M13,6 L11,8 M13,6 V8 M13,6 H11 M3,13 L5,11 M3,13 V11 M3,13 H5 M13,13 L11,11 M13,13 V11 M13,13 H11" stroke="#262626" stroke-width="1.3"/></svg>
<svg style="left:7px;top:278px" width="16" height="16" viewBox="0 0 16 16"><circle cx="6.5" cy="6.5" r="5.7" fill="#fff" stroke="#262626" stroke-width="1.2"/><path d="M10.6,10.6 L15,15" stroke="#262626" stroke-width="1.4"/><path d="M6.5,3.2 V9.8 M3.2,6.5 H9.8" stroke="#1f7bd0" stroke-width="1.5"/></svg>
<svg style="left:7px;top:303px" width="16" height="16" viewBox="0 0 16 16"><circle cx="6.5" cy="6.5" r="5.7" fill="#fff" stroke="#262626" stroke-width="1.2"/><path d="M10.6,10.6 L15,15" stroke="#262626" stroke-width="1.4"/><path d="M3.2,6.5 H9.8" stroke="#1f7bd0" stroke-width="1.5"/></svg>
<svg style="left:7px;top:329px" width="16" height="16" viewBox="0 0 16 16"><path d="M4,15 L1.5,10 Q1,8.5 2.5,8.8 L4.5,10.5 V3 Q4.5,1.8 5.6,1.8 Q6.6,1.8 6.6,3 V7 V1.8 Q6.6,0.6 7.7,0.6 Q8.8,0.6 8.8,1.8 V7 V2.3 Q8.8,1.2 9.9,1.2 Q11,1.2 11,2.3 V7.5 V4 Q11,3 12,3 Q13,3 13,4 V10 Q13,15 9,15Z" fill="#fbd98a" stroke="#f0892a" stroke-width="1.1"/></svg>
<svg style="left:7px;top:353px" width="16" height="16" viewBox="0 0 16 16"><circle cx="8" cy="8" r="7" fill="#8cc4ee" stroke="#1f7bd0" stroke-width="1.3"/><rect x="7" y="6.5" width="2" height="6" fill="#fff"/><circle cx="8" cy="4.3" r="1.1" fill="#fff"/></svg>
<svg style="left:7px;top:379px" width="16" height="16" viewBox="0 0 16 16"><rect x="1" y="7" width="5" height="8" fill="#fff" stroke="#262626" stroke-width="1.2"/><rect x="7" y="3" width="5" height="7" fill="#fff" stroke="#262626" stroke-width="1.2"/><rect x="2" y="4" width="3" height="3" fill="#fff" stroke="#262626" stroke-width="1"/><rect x="8.5" y="0.8" width="2" height="2.2" fill="#262626"/><circle cx="11.5" cy="11.5" r="4" fill="#8cc4ee" stroke="#1f7bd0" stroke-width="1.1"/><rect x="11" y="10.5" width="1.2" height="3.5" fill="#fff"/><circle cx="11.6" cy="9" r="0.7" fill="#fff"/></svg>
<svg style="left:7px;top:403px" width="16" height="16" viewBox="0 0 16 16"><circle cx="8" cy="8" r="7" fill="#fff" stroke="#1f7bd0" stroke-width="1.3"/><path d="M5,11 L11,5 M6.5,5 H11 V9.5" stroke="#1f7bd0" stroke-width="1.4" fill="none"/></svg>
<svg style="left:7px;top:428px" width="16" height="16" viewBox="0 0 16 16"><path d="M1,11 L11,1 L15,5 L5,15Z" fill="#fbd98a" stroke="#f0892a" stroke-width="1.3"/><path d="M4,10 L10,4" stroke="#1f7bd0" stroke-width="1" stroke-dasharray="1,1"/></svg>
<svg style="left:7px;top:453px" width="16" height="16" viewBox="0 0 16 16"><path d="M2.5,1 V15.5" stroke="#262626" stroke-width="1.3"/><path d="M3,2 H9 V4 H14 L12,8 L14,12 H9 V9.5 H3Z" fill="#f2a9a9" stroke="#e23b3b" stroke-width="1.2"/></svg>
<svg style="left:7px;top:479px" width="16" height="16" viewBox="0 0 16 16"><path d="M2,1 V15.5" stroke="#9b9b9b" stroke-width="1.2"/><path d="M2.5,1.5 H8 V9 H2.5 M8,3.5 H13" fill="none" stroke="#9b9b9b" stroke-width="1.1"/><circle cx="11" cy="11.5" r="4" fill="#eee" stroke="#9b9b9b" stroke-width="1.1"/><path d="M9.5,10 L12.5,13 M12.5,10 L9.5,13" stroke="#9b9b9b" stroke-width="1"/></svg>
<div class="a" style="left:30px;top:168px;width:803px;height:427px;background:#5a5a5a"></div>
<svg style="left:0;top:0" width="835" height="616" viewBox="0 0 835 616"><defs><clipPath id="mc"><rect x="32" y="170" width="800" height="425"/></clipPath></defs><g clip-path="url(#mc)"><rect x="32" y="170" width="800" height="425" fill="#f1e7d0"/>
<polygon points="32.0,186.6 75.5,169.8 118.6,169.8 121.0,175.8 137.8,169.8 189.3,169.8 198.9,196.1 155.0,212.4 143.8,181.8 125.1,188.5 133.0,209.3 32.0,247.6 32.0,228.5 104.3,203.8 95.9,180.6 32.0,203.3" fill="#dfb5b4" stroke="#d68f8f" stroke-width="1"/>
<polygon points="263.5,170.0 333.0,170.0 490.3,594.0 420.8,594.0" fill="#d6d6d6"/>
<line x1="263.5" y1="170" x2="420.8" y2="594" stroke="#d2a25a" stroke-width="1"/>
<polygon points="333.0,170.0 388.0,170.0 520.4,527.0 527.5,556.2 482.6,572.3 482.3,572.3" fill="#dfb5b4" stroke="#d68f8f" stroke-width="1"/>
<polygon points="482.6,572.3 527.5,556.2 538.3,586.7 522.0,594.0 490.7,594.0" fill="#f1e7d0" stroke="#d68f8f" stroke-width="0.6"/>
<polygon points="524.5,538.9 545.3,531.7 544.6,527.4 558.2,522.3 559.7,525.9 600.0,510.4 650.3,490.0 652.0,485.5 666.2,480.5 668.0,484.5 693.0,476.5 709.8,523.8 538.3,586.7 527.5,556.2" fill="#dfb5b4" stroke="#d68f8f" stroke-width="1"/>
<line x1="333" y1="170" x2="490.3" y2="594" stroke="#d2a25a" stroke-width="1"/>
<polygon points="522.0,594.0 538.3,586.7 709.8,523.8 740.0,515.5 832.0,484.0 832.0,595.0 522.0,595.0" fill="#d6d6d6"/>
<polyline points="522.0,594.0 538.3,586.7 709.8,523.8 740.0,515.5 832.0,484.0" fill="none" stroke="#d2a25a" stroke-width="1"/>
<polygon points="762.5,452.2 832.0,426.0 832.0,478.0 770.0,500.0" fill="#dfb5b4" stroke="#d68f8f" stroke-width="1"/>
<polygon points="145.4,550.8 188.0,535.0 190.5,545.0 193.0,546.0 207.0,594.0 160.0,594.0" fill="#dfb5b4" stroke="#d68f8f" stroke-width="1"/>
<polygon points="80.0,594.0 91.4,591.0 93.0,594.0" fill="#dfb5b4" stroke="#d68f8f" stroke-width="1"/>
<polygon points="388.0,170.0 394.0,170.0 398.5,185.0 393.5,187.0" fill="#dfb5b4" stroke="#d68f8f" stroke-width="0.8"/>
<polygon points="660.0,170.0 672.0,170.0 664.0,173.0" fill="#dfb5b4" stroke="#d68f8f" stroke-width="0.8"/>
<g transform="translate(309.5,227.5) rotate(69.6)" fill="#888888" font-family="Liberation Sans" font-size="50" font-weight="normal" stroke="#888" stroke-width="0.6"><text x="0" y="0">Лермонтова</text></g>
<polygon points="373.5,170.0 387.3,170.0 406.0,224.3 393.8,225.0" fill="#f58484"/>
<polygon points="545.9,219.4 591.3,202.2 601.7,227.5 606.6,225.9 612.1,240.5 607.6,243.7 644.0,333.1 648.9,331.5 653.1,346.1 648.2,347.7 656.3,373.1 608.2,390.0" fill="#dfb5b4" stroke="#2b5252" stroke-width="2.3" stroke-linejoin="miter"/>
<polyline points="401.6,229.9 410.9,256.7 489.0,475.0 509.0,522.0 619.3,484.4 694.7,456.0 736.2,402.5 727.4,376.8 723.0,371.8 677.0,233.5 656.0,170.0" fill="none" stroke="#fcfc8a" stroke-width="12.5" stroke-linejoin="round" stroke-linecap="round"/>
<polyline points="677.0,233.5 606.0,262.5 614.1,277.2" fill="none" stroke="#fcfc8a" stroke-width="12.5" stroke-linejoin="round" stroke-linecap="round"/>
<polyline points="619.3,484.4 631.9,522.2" fill="none" stroke="#fcfc8a" stroke-width="12.5" stroke-linejoin="round" stroke-linecap="round"/>
<polyline points="694.7,456.0 714.0,507.0 736.7,502.0 840.0,463.0" fill="none" stroke="#fcfc8a" stroke-width="12.5" stroke-linejoin="round" stroke-linecap="round"/>
<polyline points="736.7,502.0 752.5,543.6" fill="none" stroke="#fcfc8a" stroke-width="12.5" stroke-linejoin="round" stroke-linecap="round"/>
<polygon points="373.5,170.0 387.3,170.0 406.0,224.3 393.8,225.0" fill="#f58484"/>
<polyline points="752.5,543.6 614.5,593.2 580.0,605.6" fill="none" stroke="#88ee88" stroke-width="12"/>
<polyline points="379.7,170.0 410.9,256.7 489.0,475.0 509.0,522.0 619.3,484.4 694.7,456.0 736.2,402.5 727.4,378.2 723.3,378.7 721.4,373.9 725.0,371.4 677.0,233.5 656.0,170.0" fill="none" stroke="#1a58a8" stroke-width="2.6" stroke-linejoin="miter"/>
<polyline points="677.0,233.5 609.9,261.6 613.0,269.7" fill="none" stroke="#1a58a8" stroke-width="2.6" stroke-linejoin="miter"/>
<polyline points="619.3,484.4 631.9,522.2" fill="none" stroke="#1a58a8" stroke-width="2.6" stroke-linejoin="miter"/>
<polyline points="694.7,456.0 714.0,507.0 736.7,502.0 840.0,463.0" fill="none" stroke="#1a58a8" stroke-width="2.6" stroke-linejoin="miter"/>
<polyline points="736.7,502.0 752.5,543.6" fill="none" stroke="#1a58a8" stroke-width="2.6" stroke-linejoin="miter"/>
<polyline points="752.5,543.6 614.5,593.2 580.0,605.6" fill="none" stroke="#1a58a8" stroke-width="2.6" stroke-linejoin="miter"/>
<circle cx="391" cy="234" r="8.7" fill="#ff33ff" stroke="#7a007a" stroke-width="0.8"/>
<circle cx="475.3" cy="478.8" r="8.7" fill="#ff33ff" stroke="#7a007a" stroke-width="0.8"/>
<circle cx="631.9" cy="522.2" r="8.7" fill="#ff33ff" stroke="#7a007a" stroke-width="0.8"/>
<circle cx="614.1" cy="277.2" r="8.7" fill="#ff33ff" stroke="#7a007a" stroke-width="0.8"/>
<circle cx="837" cy="445" r="8" fill="#ff33ff" stroke="#7a007a" stroke-width="0.8"/>
<line x1="616.4" y1="269.7" x2="621.9" y2="281" stroke="#22cc22" stroke-width="2.5"/>
<circle cx="401.6" cy="229.9" r="2.8" fill="#444" stroke="#222" stroke-width="0.6"/>
<g transform="translate(755.6,495.6) rotate(-20)"><path d="M4,0 L-3,-3.5 L-3,3.5Z" fill="#1a58a8"/></g>
<g transform="translate(745,520) rotate(-111)"><path d="M4,0 L-3,-3.5 L-3,3.5Z" fill="#1a58a8"/></g>
<g transform="translate(667.7,574.5) rotate(-19.8)"><path d="M4,0 L-3,-3.5 L-3,3.5Z" fill="#1a58a8"/></g>
<circle cx="720" cy="355.2" r="2.6" fill="none" stroke="#8aa0d8" stroke-width="0.9"/>
<circle cx="641" cy="582.4" r="2.6" fill="#e0e0e0" stroke="#b0b0b0" stroke-width="0.8"/>
<g transform="translate(677,233.5) rotate(-20)"><rect x="-5.5" y="-5.5" width="11" height="11" fill="#c8d0d0" fill-opacity="0.55" stroke="#1a58a8" stroke-width="2.4"/><path d="M0,-5.5 V5.5 M-5.5,0 H5.5" stroke="#1a58a8" stroke-width="1" opacity="0.6"/></g>
<g transform="translate(619.3,484.4) rotate(-20)"><rect x="-5.5" y="-5.5" width="11" height="11" fill="#c8d0d0" fill-opacity="0.55" stroke="#1a58a8" stroke-width="2.4"/><path d="M0,-5.5 V5.5 M-5.5,0 H5.5" stroke="#1a58a8" stroke-width="1" opacity="0.6"/></g>
<g transform="translate(694.7,456) rotate(-20)"><rect x="-5.5" y="-5.5" width="11" height="11" fill="#c8d0d0" fill-opacity="0.55" stroke="#1a58a8" stroke-width="2.4"/><path d="M0,-5.5 V5.5 M-5.5,0 H5.5" stroke="#1a58a8" stroke-width="1" opacity="0.6"/></g>
<g transform="translate(736.7,502) rotate(-20)"><rect x="-5.5" y="-5.5" width="11" height="11" fill="#c8d0d0" fill-opacity="0.55" stroke="#1a58a8" stroke-width="2.4"/><path d="M0,-5.5 V5.5 M-5.5,0 H5.5" stroke="#1a58a8" stroke-width="1" opacity="0.6"/></g>
<g transform="translate(752.5,543.6) rotate(-20)"><rect x="-5.5" y="-5.5" width="11" height="11" fill="#c8d0d0" fill-opacity="0.55" stroke="#1a58a8" stroke-width="2.4"/><path d="M0,-5.5 V5.5 M-5.5,0 H5.5" stroke="#1a58a8" stroke-width="1" opacity="0.6"/></g>
<g transform="translate(520.6,519.8) rotate(-70)" fill="#5a3414"><path d="M-4.5,0 L4.5,0" stroke="#5a3414" stroke-width="2"/><circle cx="-4.5" cy="0" r="1.9"/><circle cx="4.5" cy="0" r="1.9"/></g>
<g transform="translate(625,502.9) rotate(-20)" fill="#5a3414"><path d="M-4.5,0 L4.5,0" stroke="#5a3414" stroke-width="2"/><circle cx="-4.5" cy="0" r="1.9"/><circle cx="4.5" cy="0" r="1.9"/></g>
<g transform="translate(774.8,488) rotate(-70)" fill="#5a3414"><path d="M-4.5,0 L4.5,0" stroke="#5a3414" stroke-width="2"/><circle cx="-4.5" cy="0" r="1.9"/><circle cx="4.5" cy="0" r="1.9"/></g>
<g transform="translate(389,200) rotate(70)" font-family="Liberation Sans" font-size="6.5" text-anchor="middle" stroke="#fff" stroke-width="2.2" paint-order="stroke" fill="#111"><text y="-1">Ø114 мм</text><text y="6" font-weight="bold">Δ G =14.7т/ч</text></g>
<g transform="translate(665,197) rotate(71.6)" font-family="Liberation Sans" font-size="6.5" text-anchor="middle" stroke="#fff" stroke-width="2.2" paint-order="stroke" fill="#111"><text y="-1">Ø70 мм</text><text y="6" font-weight="bold">Δ G =18.6т/ч</text></g>
<g transform="translate(640,248) rotate(-21)" font-family="Liberation Sans" font-size="6.5" text-anchor="middle" stroke="#fff" stroke-width="2.2" paint-order="stroke" fill="#111"><text y="-1">Ø70 мм</text><text y="6" font-weight="bold">Δ G =17.3т/ч</text></g>
<g transform="translate(697,297) rotate(71.6)" font-family="Liberation Sans" font-size="6.5" text-anchor="middle" stroke="#fff" stroke-width="2.2" paint-order="stroke" fill="#111"><text y="-1">Ø80 мм</text><text y="6" font-weight="bold">Δ G =21.2т/ч</text></g>
<g transform="translate(720,423) rotate(-56)" font-family="Liberation Sans" font-size="6.5" text-anchor="middle" stroke="#fff" stroke-width="2.2" paint-order="stroke" fill="#111"><text y="-1">Ø80 мм</text><text y="6" font-weight="bold">Δ G =31.1т/ч</text></g>
<g transform="translate(661,470) rotate(-20)" font-family="Liberation Sans" font-size="6.5" text-anchor="middle" stroke="#fff" stroke-width="2.2" paint-order="stroke" fill="#111"><text y="-1">Ø125 мм</text><text y="6" font-weight="bold">Δ G =80.8т/ч</text></g>
<g transform="translate(703,483) rotate(68)" font-family="Liberation Sans" font-size="6.5" text-anchor="middle" stroke="#fff" stroke-width="2.2" paint-order="stroke" fill="#111"><text y="-1">Ø125 мм</text><text y="6" font-weight="bold">Δ G =61.1т/ч</text></g>
<g transform="translate(804,480) rotate(-20)" font-family="Liberation Sans" font-size="6.5" text-anchor="middle" stroke="#fff" stroke-width="2.2" paint-order="stroke" fill="#111"><text y="-1">Ø125 мм</text><text y="6" font-weight="bold">Δ G =62.1т/ч</text></g>
<g transform="translate(700,563) rotate(-19.8)" font-family="Liberation Sans" font-size="6.5" text-anchor="middle" stroke="#fff" stroke-width="2.2" paint-order="stroke" fill="#111"><text y="-1">Ø200 мм</text><text y="6" font-weight="bold">Δ G =180.8т/ч</text></g>
<g transform="translate(499,498) rotate(68)" font-family="Liberation Sans" font-size="6.5" text-anchor="middle" stroke="#fff" stroke-width="2.2" paint-order="stroke" fill="#111"><text y="-1">Ø100 мм</text><text y="6" font-weight="bold">Δ G =32.8т/ч</text></g>
<g transform="translate(574,502) rotate(-20)" font-family="Liberation Sans" font-size="6.5" text-anchor="middle" stroke="#fff" stroke-width="2.2" paint-order="stroke" fill="#111"><text y="-1">Ø100 мм</text><text y="6" font-weight="bold">Δ G =32.8т/ч</text></g>
<g stroke="#000" stroke-width="1" fill="none"><path d="M679,234 L701,232"/><path d="M619,484 L601.5,463.5"/><path d="M696,456 L715,458"/><path d="M738,503 L765,516"/><path d="M753,544 L780,565"/></g>
<rect x="701.5" y="231.5" width="38" height="18" fill="#fff" stroke="#000" stroke-width="1.5"/><text x="720.5" y="244.5" text-anchor="middle" font-size="14" letter-spacing="-0.6" font-family="Liberation Sans">ТК-14</text>
<rect x="564.5" y="445.5" width="37" height="18" fill="#fff" stroke="#000" stroke-width="1.5"/><text x="583.0" y="458.5" text-anchor="middle" font-size="14" letter-spacing="-0.6" font-family="Liberation Sans">ТК-29</text>
<rect x="714.5" y="443.5" width="36" height="18" fill="#fff" stroke="#000" stroke-width="1.5"/><text x="732.5" y="456.5" text-anchor="middle" font-size="14" letter-spacing="-0.6" font-family="Liberation Sans">ТК-30</text>
<rect x="764.5" y="510.5" width="29" height="18" fill="#fff" stroke="#000" stroke-width="1.5"/><text x="779.0" y="523.5" text-anchor="middle" font-size="14" letter-spacing="-0.6" font-family="Liberation Sans">ТК-4</text>
<rect x="773.5" y="558.5" width="29" height="18" fill="#fff" stroke="#000" stroke-width="1.5"/><text x="788.0" y="571.5" text-anchor="middle" font-size="14" letter-spacing="-0.6" font-family="Liberation Sans">ТК-3</text>
<rect x="553.5" y="577.5" width="30" height="18" fill="#fff" stroke="#000" stroke-width="1.5"/><text x="568.5" y="590.5" text-anchor="middle" font-size="14" letter-spacing="-0.6" font-family="Liberation Sans">ТК-2</text></g></svg>
<div class="a" style="left:102px;top:257px;width:438px;height:218px;background:#d5e1ef;border:1px solid #404040"></div>
<div class="a" style="left:103px;top:258px;width:436px;height:1px;background:#f4f8fc"></div>
<div class="a" style="left:103px;top:258px;width:1px;height:216px;background:#f4f8fc"></div>
<div class="a" style="left:107px;top:262px;width:428px;height:15px;background:#bfcddc"></div>
<div class="a" style="left:110px;top:262px;font-size:12px;line-height:15px">Здания</div>
<div class="a" style="left:460px;top:273px;width:7px;height:2px;background:#000"></div>
<div class="a" style="left:479px;top:265px;width:11px;height:10px;border:2px solid #000"></div>
<svg style="left:499px;top:266px" width="11" height="7" viewBox="0 0 11 7"><path d="M0,7 L5.5,0 L11,7Z" fill="#000"/></svg>
<svg style="left:520px;top:266px" width="10" height="10" viewBox="0 0 10 10"><path d="M0.8,0.8 L9.2,9.2 M9.2,0.8 L0.8,9.2" stroke="#000" stroke-width="2"/></svg>
<div class="a" style="left:107px;top:277px;width:428px;height:28px;background:#e5eaf3"></div>
<div class="a" style="left:107px;top:305px;width:428px;height:20px;background:#dcdcdc;border-top:1px solid #a9a9a9"></div>
<div class="a" style="left:111.5px;top:308px;width:92.5px;height:17px;background:#efefef;border:1px solid #a8a8a8;border-bottom:none;border-radius:2px 2px 0 0"></div>
<div class="a" style="left:115.5px;top:309px;font-size:11.5px;line-height:15px">Текущая запись</div>
<div class="a" style="left:204.5px;top:308px;width:45.5px;height:17px;background:#efefef;border:1px solid #a8a8a8;border-bottom:none;border-radius:2px 2px 0 0"></div>
<div class="a" style="left:208.5px;top:309px;font-size:11.5px;line-height:15px">Запрос</div>
<div class="a" style="left:250.5px;top:308px;width:34.0px;height:17px;background:#efefef;border:1px solid #a8a8a8;border-bottom:none;border-radius:2px 2px 0 0"></div>
<div class="a" style="left:254.5px;top:309px;font-size:11.5px;line-height:15px">База</div>
<div class="a" style="left:284.5px;top:307px;width:39px;height:18px;background:#fff;border:1px solid #a8a8a8;border-bottom:none;border-radius:2px 2px 0 0"></div>
<div class="a" style="left:288px;top:309px;font-size:11.5px;line-height:15px;letter-spacing:-0.2px">Ответ</div>
<div class="a" style="left:520px;top:307px;width:13px;height:15px;background:#e8e8e8;border:1px solid #c8c8c8"></div>
<svg style="left:524px;top:311px" width="5" height="8" viewBox="0 0 5 8"><path d="M0,0 L5,4 L0,8Z" fill="#808080"/></svg>
<div class="a" style="left:107px;top:325px;width:428px;height:144px;background:#fff;border:1px solid #a0a0a0"></div>
<div class="a" style="left:108px;top:326px;width:426px;height:17px;background:#f0f0f0;border-bottom:1px solid #d5d5d5"></div>
<div class="a" style="left:112px;top:328px;font-size:11.5px;line-height:14px">Sys</div>
<div class="a" style="left:208px;top:328px;font-size:11.5px;line-height:14px">Квартал</div>
<div class="a" style="left:304px;top:328px;font-size:11.5px;line-height:14px">Улица</div>
<div class="a" style="left:400px;top:328px;font-size:11.5px;line-height:14px">Номер дома</div>
<div class="a" style="left:496px;top:328px;font-size:11.5px;line-height:14px">Корпус</div>
<div class="a" style="left:203px;top:326px;width:1px;height:17px;background:#b4b4b4"></div>
<div class="a" style="left:203px;top:343px;width:1px;height:17px;background:#dcdcdc"></div>
<div class="a" style="left:299px;top:326px;width:1px;height:17px;background:#b4b4b4"></div>
<div class="a" style="left:299px;top:343px;width:1px;height:17px;background:#dcdcdc"></div>
<div class="a" style="left:395px;top:326px;width:1px;height:17px;background:#b4b4b4"></div>
<div class="a" style="left:395px;top:343px;width:1px;height:17px;background:#dcdcdc"></div>
<div class="a" style="left:491px;top:326px;width:1px;height:17px;background:#b4b4b4"></div>
<div class="a" style="left:491px;top:343px;width:1px;height:17px;background:#dcdcdc"></div>
<div class="a" style="left:108px;top:359px;width:426px;height:1px;background:#e4e4e4"></div>
<div class="a" style="left:112px;top:344px;font-size:11.5px;line-height:14px">55</div>
<div class="a" style="left:208px;top:344px;font-size:11.5px;line-height:14px">105</div>
<div class="a" style="left:304px;top:344px;font-size:11.5px;line-height:14px">Лермонтова</div>
<div class="a" style="left:400px;top:344px;font-size:11.5px;line-height:14px">6</div>
<div class="a" style="left:108px;top:344px;width:95px;height:15px;border:1px dotted #000"></div>
<div class="a" style="left:108px;top:453px;width:426px;height:15px;background:#f0f0f0"></div>
<div class="a" style="left:125px;top:454px;width:103px;height:13px;background:#cdcdcd"></div>
<svg style="left:113px;top:457px" width="6" height="8" viewBox="0 0 6 8"><path d="M5,0.5 L1.2,4 L5,7.5" fill="none" stroke="#505050" stroke-width="1.8"/></svg>
<svg style="left:522px;top:457px" width="6" height="8" viewBox="0 0 6 8"><path d="M1,0.5 L4.8,4 L1,7.5" fill="none" stroke="#505050" stroke-width="1.8"/></svg>
<svg style="left:112px;top:283px" width="16" height="16" viewBox="0 0 16 16"><rect x="0.5" y="0.5" width="13" height="14" fill="#fff" stroke="#262626" stroke-width="1.1"/><rect x="2" y="2" width="10" height="8" fill="#f3d9b5"/><path d="M2,14 V9 L5,6 L8,9 V14Z" fill="#a9d9a9"/><circle cx="11" cy="10.5" r="3.2" fill="#fff" fill-opacity="0.9" stroke="#1f7bd0" stroke-width="1.2"/><path d="M13.24,12.74 l3,3" stroke="#1f7bd0" stroke-width="1.5" stroke-linecap="round"/></svg>
<svg style="left:148px;top:283px" width="16" height="16" viewBox="0 0 16 16"><circle cx="10" cy="6" r="5" fill="none" stroke="#1f7bd0" stroke-width="1.4"/><path d="M6.5,9.5 L1.5,14.5" stroke="#1f7bd0" stroke-width="1.6" stroke-linecap="round"/></svg>
<svg style="left:178px;top:283px" width="16" height="16" viewBox="0 0 16 16"><circle cx="8" cy="8" r="7" fill="#fff" stroke="#e23b3b" stroke-width="1.4"/><path d="M4,8 H12" stroke="#e23b3b" stroke-width="1.4"/></svg>
<svg style="left:210px;top:283px" width="16" height="16" viewBox="0 0 16 16"><path d="M0.8,0.8 H15.2 V15.2 H3 L0.8,13Z" fill="#e2c0e2" stroke="#a545a5" stroke-width="1.4"/><rect x="3.5" y="1.5" width="9" height="6" fill="#fff"/><rect x="5" y="10" width="6" height="5" fill="#fff" stroke="#a545a5" stroke-width="1"/><rect x="6" y="11.5" width="1" height="2" fill="#262626"/></svg>
<svg style="left:235px;top:283px" width="16" height="16" viewBox="0 0 16 16"><g transform="translate(0,0) scale(1.0)"><rect x="4" y="1.5" width="8" height="4" fill="#fff" stroke="#262626" stroke-width="1.2"/><rect x="1.5" y="5.5" width="13" height="6" rx="1" fill="#fff" stroke="#262626" stroke-width="1.3"/><rect x="4" y="9.5" width="8" height="5" fill="#fff" stroke="#262626" stroke-width="1.2"/><path d="M5.5,11.5 H10.5 M5.5,13 H10.5" stroke="#262626" stroke-width="0.8"/></g></svg>
<svg style="left:260px;top:283px" width="16" height="16" viewBox="0 0 16 16"><rect x="1.5" y="0.5" width="8" height="10" fill="#fff" stroke="#555" stroke-width="0.9"/><rect x="1.5" y="0.5" width="8" height="2" fill="#555"/><path d="M3,4.5 H8 M3,6.5 H8 M3,8.5 H6" stroke="#777" stroke-width="0.7"/><path d="M3,10 V12.5 H5.5" stroke="#e23b3b" stroke-width="1.2" fill="none"/><path d="M5,11 L7,12.5 L5,14Z" fill="#e23b3b"/><rect x="7" y="6.5" width="8.5" height="9" fill="#fff" stroke="#25a84a" stroke-width="1.2"/><path d="M9,8.8 L13.5,13.5 M13.5,8.8 L9,13.5" stroke="#25a84a" stroke-width="1.2"/></svg>
<svg style="left:285px;top:283px" width="16" height="16" viewBox="0 0 16 16"><rect x="1.5" y="0.5" width="8" height="10" fill="#fff" stroke="#555" stroke-width="0.9"/><rect x="1.5" y="0.5" width="8" height="2" fill="#555"/><path d="M3,4.5 H8 M3,6.5 H8 M3,8.5 H6" stroke="#777" stroke-width="0.7"/><path d="M3,10 V12.5 H5.5" stroke="#e23b3b" stroke-width="1.2" fill="none"/><path d="M5,11 L7,12.5 L5,14Z" fill="#e23b3b"/><rect x="7" y="6.5" width="8.5" height="9" fill="#6ab0ec" stroke="#1f7bd0" stroke-width="1.2"/><circle cx="11.2" cy="11" r="2.6" fill="#3a8ad8" stroke="#bfe0fa" stroke-width="0.8"/></svg>
<svg style="left:135px;top:290px" width="6" height="4" viewBox="0 0 6 4"><path d="M0,0 H6 L3,3.5Z" fill="#1a1a2a"/></svg>
<div class="a" style="left:172px;top:282px;width:1px;height:20px;background:#c8ccd6"></div>
<div class="a" style="left:203px;top:282px;width:1px;height:20px;background:#c8ccd6"></div>
<div class="a" style="left:30px;top:595px;width:804px;height:1px;background:#fff"></div>
<div class="a" style="left:832px;top:170px;width:1px;height:426px;background:#fff"></div>
<div class="a" style="left:833px;top:113px;width:1px;height:483px;background:#eef0f5"></div>
<div class="a" style="left:1px;top:596px;width:833px;height:19px;background:#f0f0f0"></div>
<div class="a" style="left:4px;top:600px;font-size:12px">Готов</div>
<div class="a" style="left:246px;top:598px;width:1px;height:16px;background:#d9d9d9"></div>
<div class="a" style="left:446px;top:598px;width:1px;height:16px;background:#d9d9d9"></div>
<div class="a" style="left:518px;top:598px;width:1px;height:16px;background:#d9d9d9"></div>
<div class="a" style="left:702px;top:598px;width:1px;height:16px;background:#d9d9d9"></div>
<div class="a" style="left:786px;top:598px;width:1px;height:16px;background:#d9d9d9"></div>
<div class="a" style="left:451px;top:600px;">ID:55</div>
<div class="a" style="left:525px;top:600px;">X:</div>
<div class="a" style="left:545px;top:600px;letter-spacing:-0.55px">5496.96 м</div>
<div class="a" style="left:602px;top:600px;">Y:</div>
<div class="a" style="left:622px;top:600px;letter-spacing:-0.55px">9714.17 м</div>
<div class="a" style="left:710px;top:600px;letter-spacing:-0.4px">M1:1044</div>
<div class="a" style="left:830px;top:605px;width:2px;height:2px;background:#a8a8a8"></div>
<div class="a" style="left:827px;top:608px;width:2px;height:2px;background:#a8a8a8"></div>
<div class="a" style="left:830px;top:608px;width:2px;height:2px;background:#a8a8a8"></div>
<div class="a" style="left:824px;top:611px;width:2px;height:2px;background:#a8a8a8"></div>
<div class="a" style="left:827px;top:611px;width:2px;height:2px;background:#a8a8a8"></div>
<div class="a" style="left:830px;top:611px;width:2px;height:2px;background:#a8a8a8"></div>
<div class="a" style="left:0px;top:0px;width:835px;height:1px;background:#3f3f3f"></div>
<div class="a" style="left:0px;top:0px;width:1px;height:616px;background:#3f3f3f"></div>
<div class="a" style="left:834px;top:0px;width:1px;height:616px;background:#3f3f3f"></div>
<div class="a" style="left:0px;top:615px;width:835px;height:1px;background:#3f3f3f"></div></body></html>
